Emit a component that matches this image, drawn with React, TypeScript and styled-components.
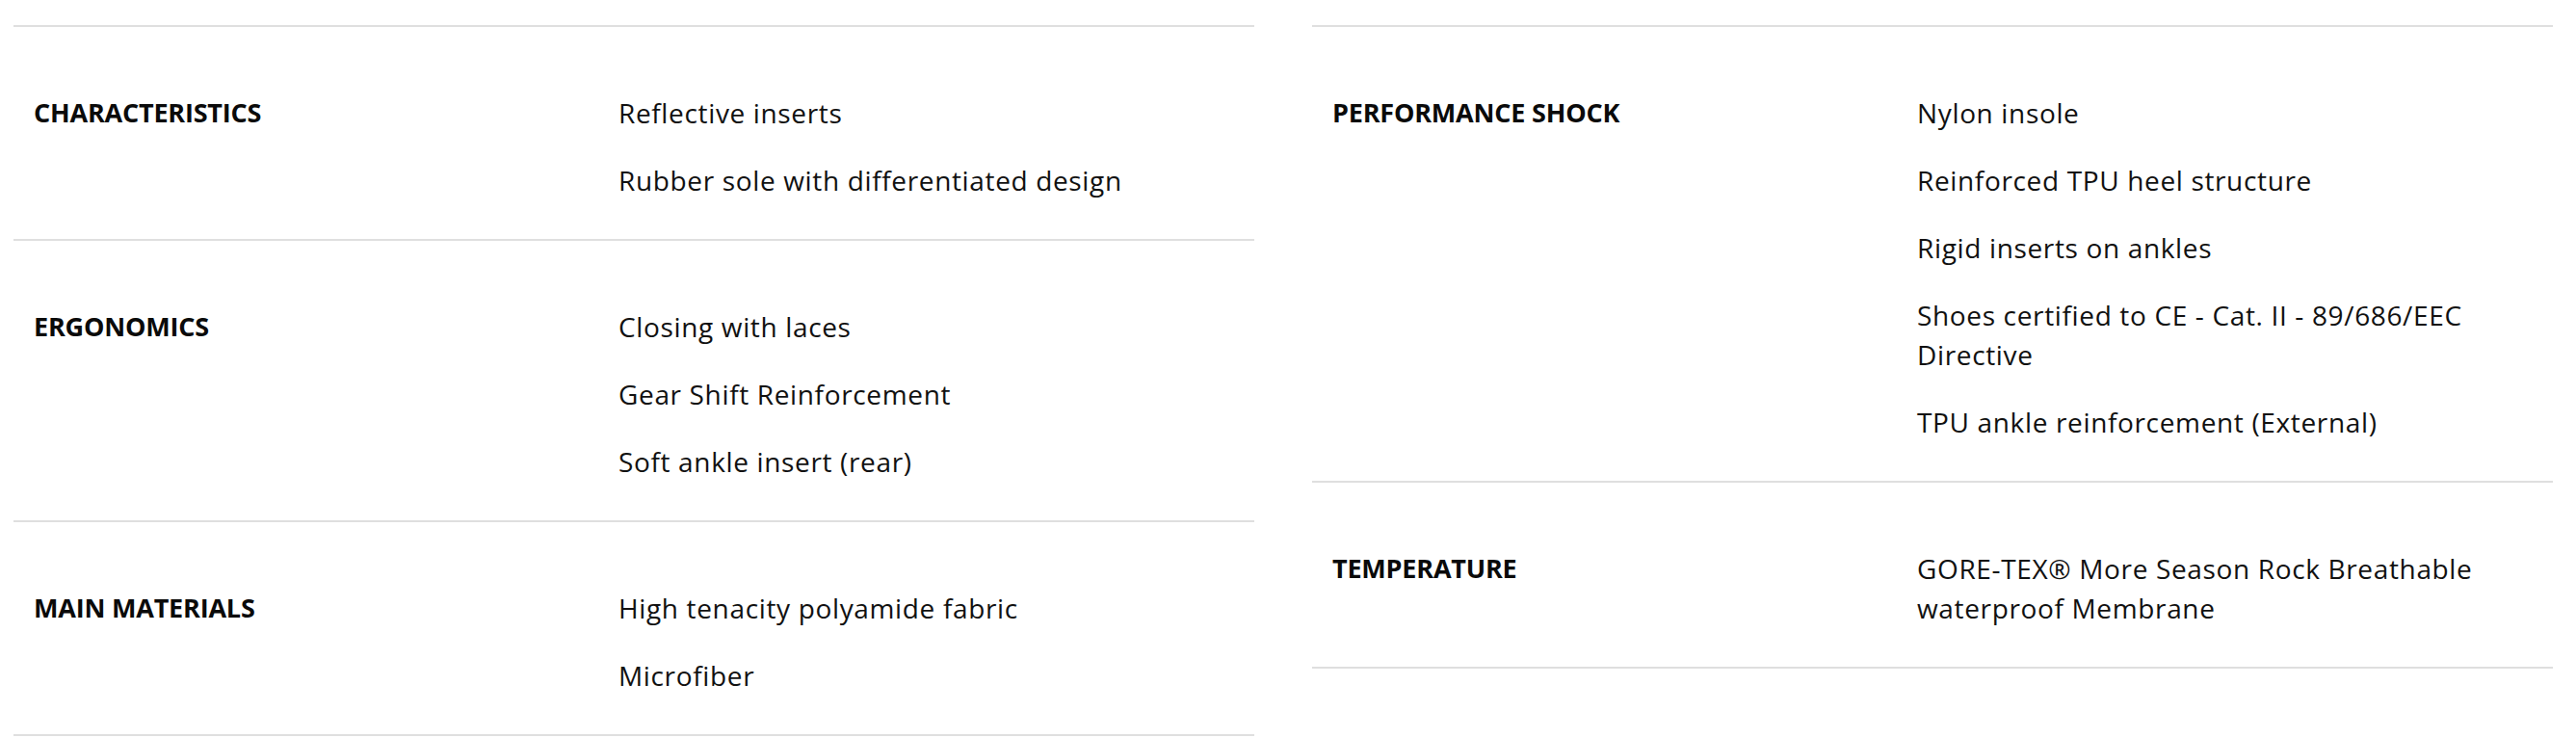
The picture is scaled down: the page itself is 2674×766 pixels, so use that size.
import React from "react";
import styled, { createGlobalStyle } from "styled-components";

const GlobalStyle = createGlobalStyle`
  html, body {
    margin: 0;
    padding: 0;
    background: #ffffff;
  }
  body {
    font-family: "Open Sans", "Noto Sans", "Liberation Sans", sans-serif;
    color: #111111;
  }
`;

type Spec = { title: string; items: string[] };

const leftSpecs: Spec[] = [
  {
    title: "Characteristics",
    items: ["Reflective inserts", "Rubber sole with differentiated design"],
  },
  {
    title: "Ergonomics",
    items: ["Closing with laces", "Gear Shift Reinforcement", "Soft ankle insert (rear)"],
  },
  {
    title: "Main materials",
    items: ["High tenacity polyamide fabric", "Microfiber"],
  },
];

const rightSpecs: Spec[] = [
  {
    title: "Performance shock",
    items: [
      "Nylon insole",
      "Reinforced TPU heel structure",
      "Rigid inserts on ankles",
      "Shoes certified to CE - Cat. II - 89/686/EEC Directive",
      "TPU ankle reinforcement (External)",
    ],
  },
  {
    title: "Temperature",
    items: ["GORE-TEX® More Season Rock Breathable waterproof Membrane"],
  },
];

const Page = styled.div`
  display: grid;
  grid-template-columns: 1288px 1288px;
  column-gap: 60px;
  align-items: start;
  padding: 26px 0 0 14px;
`;

const Column = styled.section`
  border-top: 2px solid #dfdfdf;
`;

const Row = styled.div`
  display: grid;
  grid-template-columns: 628px 1fr;
  padding: 40px 28px 40px 0;
  border-bottom: 2px solid #dfdfdf;
`;

const Heading = styled.h3`
  margin: 29px 0 0;
  padding-left: 21px;
  font-family: "Open Sans", "Noto Sans", sans-serif;
  font-weight: 700;
  font-size: 27px;
  line-height: 39px;
  letter-spacing: -0.2px;
  text-transform: uppercase;
  color: #0a0a0a;
`;

const List = styled.ul`
  margin: 0;
  padding: 0;
  list-style: none;
`;

const Item = styled.li`
  margin-top: 29px;
  font-family: "Open Sans", "Noto Sans", sans-serif;
  font-weight: 400;
  font-size: 28px;
  line-height: 41px;
  letter-spacing: 0.65px;
  color: #111111;
`;

const SpecColumn = ({ specs }: { specs: Spec[] }) => (
  <Column>
    {specs.map((s) => (
      <Row key={s.title}>
        <Heading>{s.title}</Heading>
        <List>
          {s.items.map((it) => (
            <Item key={it}>{it}</Item>
          ))}
        </List>
      </Row>
    ))}
  </Column>
);

export default function App() {
  return (
    <>
      <GlobalStyle />
      <Page>
        <SpecColumn specs={leftSpecs} />
        <SpecColumn specs={rightSpecs} />
      </Page>
    </>
  );
}
